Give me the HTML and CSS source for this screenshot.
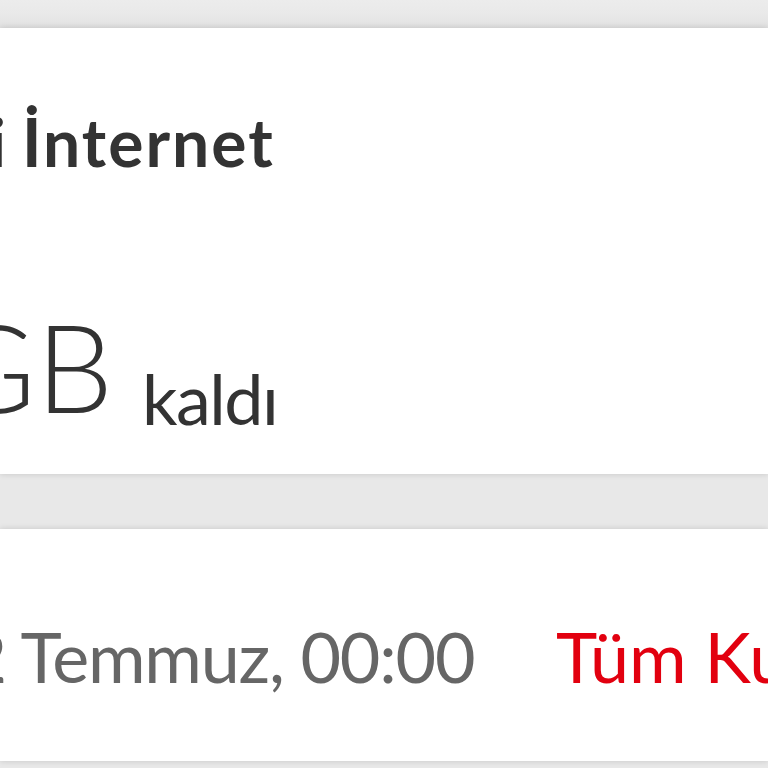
FILE: index.html
```html
<!DOCTYPE html>
<html>
<head>
    <title>Paket Detayı</title>
    <link rel="stylesheet" href="styles.css">
</head>
<body>
    <div class="top-band"></div>

    <div class="card usage">
        <h1 class="usage-title"><span class="pre">Yurtiçi</span> İnternet</h1>
        <div class="usage-amount"><span class="amount"><span class="pre">10 G</span>B</span><span class="left">kaldı</span></div>
    </div>

    <div class="gap-band"></div>

    <div class="card renew">
        <div class="renew-date"><span class="pre">12</span> Temmuz, 00:00</div>
        <a class="renew-link" href="#">Tüm Kullanımlar</a>
    </div>
</body>
</html>
```

FILE: styles.css
```css
html, body {
    margin: 0;
    padding: 0;
}
body {
    font-family: Lato, "Open Sans", sans-serif;
    background-color: #e8e8e8;
    overflow: hidden;
    width: 768px;
    height: 768px;
}
.top-band {
    height: 28px;
    background: linear-gradient(#ececec, #e9e9e9 50%, #e2e2e2);
}
.card {
    background-color: #fff;
    box-shadow: 0 0 6px rgba(0, 0, 0, 0.15);
    white-space: nowrap;
}
/* the first part of each text runs past the left edge of the screen */
.pre {
    display: inline-block;
    width: 400px;
    text-align: right;
}
.usage {
    height: 446px;
    box-sizing: border-box;
    padding-top: 81px;
}
.usage-title {
    margin: 0;
    font-size: 66px;
    line-height: 1;
    font-weight: 700;
    letter-spacing: 2px;
    word-spacing: -4px;
    color: #333;
}
.usage-title .pre {
    margin-left: -392px;
}
.usage-amount {
    margin-top: 130px;
    font-size: 122px;
    line-height: 1;
    color: #333;
}
.amount {
    display: inline-block;
    width: 142px;
    font-weight: 300;
}
.amount .pre {
    margin-left: -364px;
}
.left {
    font-size: 70px;
    font-weight: 400;
    letter-spacing: -1.5px;
    vertical-align: -12px;
}
.gap-band {
    height: 55px;
}
.renew {
    height: 232px;
    box-sizing: border-box;
    padding-top: 92px;
    display: flex;
    font-size: 70px;
    line-height: 1;
}
.renew-date {
    flex: 0 0 556px;
    color: #666;
    letter-spacing: -1.2px;
}
.renew-date .pre {
    margin-left: -394px;
}
.renew-link {
    color: #e2000f;
    text-decoration: none;
}
```
